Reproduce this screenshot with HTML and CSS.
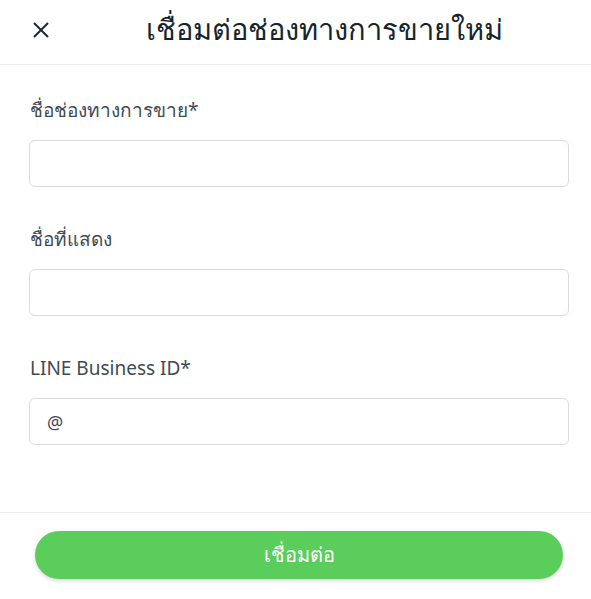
FILE: index.html
```html
<!DOCTYPE html>
<html lang="th">
<head>
    <meta charset="UTF-8">
    <meta name="viewport" content="width=device-width, initial-scale=1.0">
    <title>เชื่อมต่อช่องทางการขายใหม่</title>
    <link rel="stylesheet" href="styles.css">
</head>
<body>

    <div class="modal">
        <div class="modal-header">
            <button class="close-btn" aria-label="close">
                <svg width="16" height="16" viewBox="0 0 16 16">
                    <path d="M1 1 L15 15 M15 1 L1 15" stroke="#1b2a30" stroke-width="2" fill="none"/>
                </svg>
            </button>
            <h1>เชื่อมต่อช่องทางการขายใหม่</h1>
        </div>

        <div class="modal-body">
            <div class="field">
                <label for="channelName">ชื่อช่องทางการขาย*</label>
                <input type="text" id="channelName">
            </div>
            <div class="field">
                <label for="displayName">ชื่อที่แสดง</label>
                <input type="text" id="displayName">
            </div>
            <div class="field">
                <label for="lineId">LINE Business ID*</label>
                <input type="text" id="lineId" value="@">
            </div>
        </div>

        <div class="modal-footer">
            <button class="connect-btn">เชื่อมต่อ</button>
        </div>
    </div>

</body>
</html>
```

FILE: styles.css
```css
* {
    margin: 0;
    padding: 0;
    box-sizing: border-box;
}

body {
    font-family: "Noto Sans", "Open Sans", sans-serif;
    background-color: #ffffff;
    color: #3f4b52;
}

.modal {
    width: 591px;
    height: 599px;
    background-color: #fff;
    display: flex;
    flex-direction: column;
}

/* Header */
.modal-header {
    height: 65px;
    border-bottom: 1px solid #ececec;
    display: flex;
    align-items: center;
    padding-left: 33px;
}

.close-btn {
    background: none;
    border: none;
    width: 16px;
    height: 16px;
    display: flex;
    cursor: pointer;
    margin-top: -4px;
}

.modal-header h1 {
    flex: 1;
    text-align: center;
    font-size: 29px;
    font-weight: 500;
    color: #14252b;
    margin-left: 8px;
    margin-top: -4px;
}

/* Body */
.modal-body {
    flex: 1;
    padding: 30px 22px 0 29px;
}

.field {
    margin-bottom: 37px;
}

.field label {
    display: block;
    font-size: 19px;
    line-height: 30px;
    color: #3f4b52;
    padding-left: 1px;
    margin-bottom: 15px;
}

.field input {
    width: 540px;
    height: 47px;
    border: 1px solid #dcdcdc;
    border-radius: 6px;
    padding: 0 17px;
    font-size: 18px;
    font-family: inherit;
    color: #3f4b52;
    outline: none;
}

/* Footer */
.modal-footer {
    border-top: 1px solid #ececec;
    padding: 18px 28px 20px 35px;
}

.connect-btn {
    width: 528px;
    height: 48px;
    border: none;
    border-radius: 24px;
    background-color: #5bcd5b;
    color: #fff;
    font-size: 20px;
    font-family: inherit;
    box-shadow: 0 2px 4px rgba(0, 0, 0, 0.15);
    cursor: pointer;
}
```
